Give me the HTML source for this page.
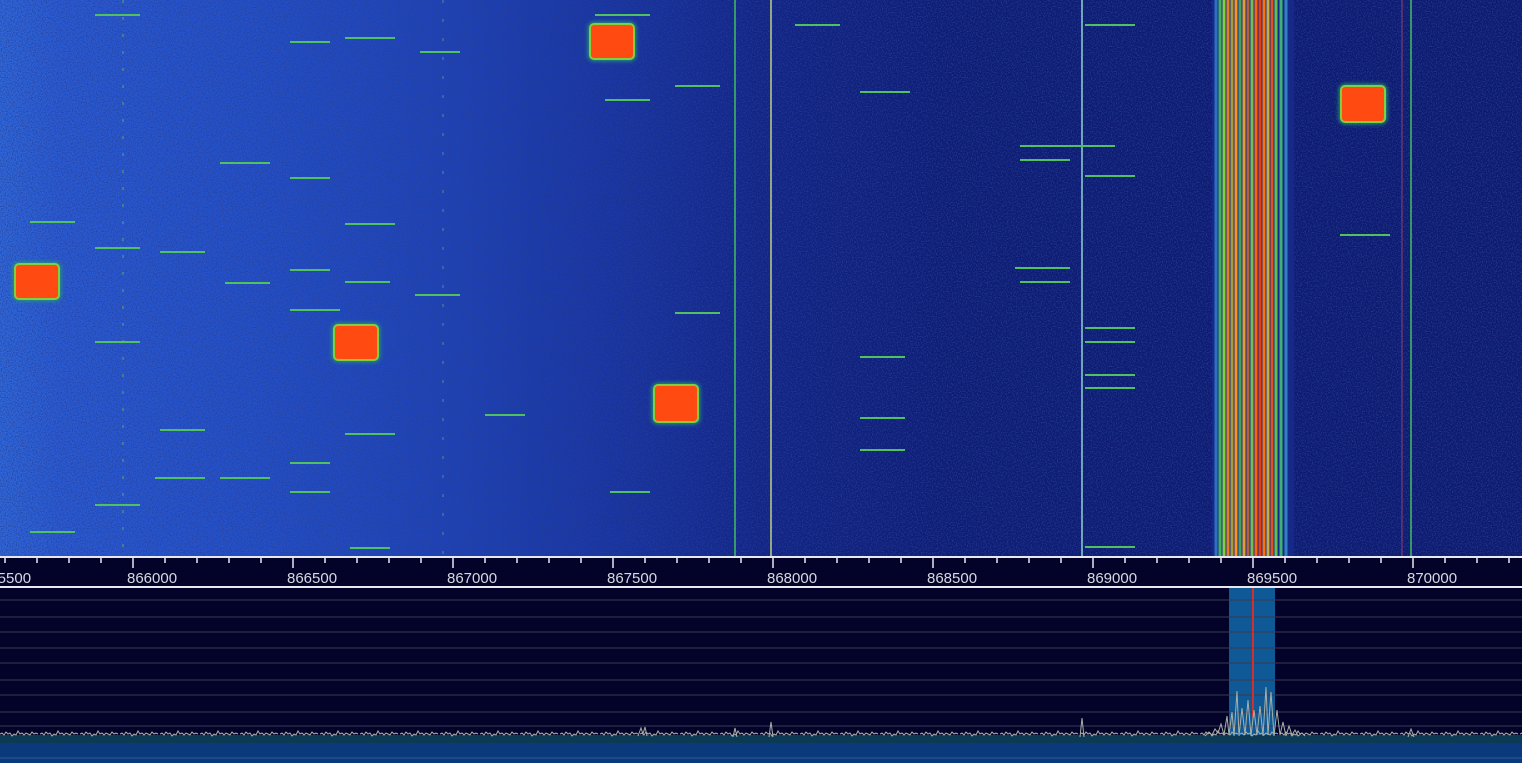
<!DOCTYPE html>
<html><head><meta charset="utf-8"><style>
html,body{margin:0;padding:0;background:#03032a;}
#root{position:relative;width:1522px;height:763px;overflow:hidden;font-family:"Liberation Sans",sans-serif;}
#wf{position:absolute;left:0;top:0;width:1522px;height:556px;
background:linear-gradient(90deg,#2f66d8 0px,#2a5ad2 60px,#2450c8 250px,#1e42b6 450px,#1833a0 620px,#122486 760px,#0e1c74 950px,#0d1a6e 1522px);}
.blk{position:absolute;width:42px;height:33px;background:#ff4a12;box-shadow:0 0 0 2px #7fd040,0 0 4px 3px #2a9a70;border-radius:3px;}
#axis{position:absolute;left:0;top:556px;width:1522px;height:32px;background:#03032a;border-top:2px solid #e8e8f0;border-bottom:2px solid #e8e8f0;box-sizing:border-box;}
.lbl{position:absolute;top:12px;color:#d8d8e0;font-size:15px;}
</style></head><body><div id="root">
<div id="wf"></div>
<svg style="position:absolute;left:0;top:0" width="1522" height="556">
<filter id="n"><feTurbulence type="fractalNoise" baseFrequency="0.8" numOctaves="1" seed="3"/><feColorMatrix values="0 0 0 0 0.02  0 0 0 0 0.05  0 0 0 0 0.3  0 0 0 4 -1.8"/></filter>
<rect width="1522" height="556" filter="url(#n)" opacity="0.7"/>
<g stroke-width="1.5">
<line x1="735" y1="0" x2="735" y2="556" stroke="#3fc060"/>
<line x1="771" y1="0" x2="771" y2="556" stroke="#c0d080"/>
<line x1="1082" y1="0" x2="1082" y2="556" stroke="#8fd0d0"/>
<line x1="1411" y1="0" x2="1411" y2="556" stroke="#40c060"/>
<line x1="1402" y1="0" x2="1402" y2="556" stroke="#a04070" opacity=".6"/>
<line x1="123" y1="0" x2="123" y2="556" stroke="#60a070" stroke-dasharray="3 14" opacity=".7"/>
<line x1="443" y1="0" x2="443" y2="556" stroke="#6090a0" stroke-dasharray="3 16" opacity=".6"/>
</g>
<rect x="1212" y="0" width="82" height="556" fill="#16288a"/>
<g stroke-width="3">
<line x1="1216" x2="1216" y1="0" y2="556" stroke="#3070c0"/>
<line x1="1220" x2="1220" y1="0" y2="556" stroke="#40b060"/>
<line x1="1224" x2="1224" y1="0" y2="556" stroke="#80d040"/>
<line x1="1228" x2="1228" y1="0" y2="556" stroke="#e08020"/>
<line x1="1232" x2="1232" y1="0" y2="556" stroke="#a0a040"/>
<line x1="1236" x2="1236" y1="0" y2="556" stroke="#ff9020"/>
<line x1="1240" x2="1240" y1="0" y2="556" stroke="#40a060"/>
<line x1="1244" x2="1244" y1="0" y2="556" stroke="#e0a030"/>
<line x1="1248" x2="1248" y1="0" y2="556" stroke="#b06040"/>
<line x1="1252" x2="1252" y1="0" y2="556" stroke="#70c050"/>
<line x1="1256" x2="1256" y1="0" y2="556" stroke="#ff6010"/>
<line x1="1260" x2="1260" y1="0" y2="556" stroke="#e04010"/>
<line x1="1264" x2="1264" y1="0" y2="556" stroke="#ff7010"/>
<line x1="1268" x2="1268" y1="0" y2="556" stroke="#c0b040"/>
<line x1="1272" x2="1272" y1="0" y2="556" stroke="#e05020"/>
<line x1="1276" x2="1276" y1="0" y2="556" stroke="#60c050"/>
<line x1="1281" x2="1281" y1="0" y2="556" stroke="#40b070"/>
<line x1="1286" x2="1286" y1="0" y2="556" stroke="#3080c0"/>
</g>
<g stroke="#50c060" stroke-width="2">
<line x1="95" x2="140" y1="15" y2="15"/><line x1="290" x2="330" y1="42" y2="42"/><line x1="345" x2="395" y1="38" y2="38"/>
<line x1="420" x2="460" y1="52" y2="52"/><line x1="595" x2="650" y1="15" y2="15"/><line x1="675" x2="720" y1="86" y2="86"/>
<line x1="795" x2="840" y1="25" y2="25"/><line x1="860" x2="910" y1="92" y2="92"/><line x1="1085" x2="1135" y1="25" y2="25"/>
<line x1="220" x2="270" y1="163" y2="163"/><line x1="290" x2="330" y1="178" y2="178"/><line x1="1020" x2="1115" y1="146" y2="146"/>
<line x1="1020" x2="1070" y1="160" y2="160"/><line x1="1085" x2="1135" y1="176" y2="176"/><line x1="1340" x2="1390" y1="235" y2="235"/>
<line x1="30" x2="75" y1="222" y2="222"/><line x1="95" x2="140" y1="248" y2="248"/><line x1="160" x2="205" y1="252" y2="252"/>
<line x1="345" x2="395" y1="224" y2="224"/><line x1="225" x2="270" y1="283" y2="283"/><line x1="290" x2="330" y1="270" y2="270"/>
<line x1="290" x2="340" y1="310" y2="310"/><line x1="345" x2="390" y1="282" y2="282"/><line x1="415" x2="460" y1="295" y2="295"/>
<line x1="1015" x2="1070" y1="268" y2="268"/><line x1="1020" x2="1070" y1="282" y2="282"/><line x1="1085" x2="1135" y1="328" y2="328"/>
<line x1="1085" x2="1135" y1="342" y2="342"/><line x1="1085" x2="1135" y1="375" y2="375"/><line x1="1085" x2="1135" y1="388" y2="388"/>
<line x1="95" x2="140" y1="342" y2="342"/><line x1="160" x2="205" y1="430" y2="430"/><line x1="345" x2="395" y1="434" y2="434"/>
<line x1="290" x2="330" y1="463" y2="463"/><line x1="155" x2="205" y1="478" y2="478"/><line x1="220" x2="270" y1="478" y2="478"/>
<line x1="290" x2="330" y1="492" y2="492"/><line x1="95" x2="140" y1="505" y2="505"/><line x1="30" x2="75" y1="532" y2="532"/>
<line x1="610" x2="650" y1="492" y2="492"/><line x1="485" x2="525" y1="415" y2="415"/><line x1="860" x2="905" y1="418" y2="418"/>
<line x1="860" x2="905" y1="450" y2="450"/><line x1="860" x2="905" y1="357" y2="357"/><line x1="1085" x2="1135" y1="547" y2="547"/>
<line x1="350" x2="390" y1="548" y2="548"/><line x1="675" x2="720" y1="313" y2="313"/><line x1="605" x2="650" y1="100" y2="100"/>
</g>
</svg>
<div class="blk" style="left:16px;top:265px"></div>
<div class="blk" style="left:335px;top:326px"></div>
<div class="blk" style="left:591px;top:25px"></div>
<div class="blk" style="left:655px;top:386px;height:35px"></div>
<div class="blk" style="left:1342px;top:87px;height:34px"></div>
<div id="axis">
<svg style="position:absolute;left:0;top:0" width="1522" height="12" stroke="#e8e8f0" stroke-width="1.5">
<path d="M5 0v5M37 0v5M69 0v5M101 0v5M165 0v5M197 0v5M229 0v5M261 0v5M325 0v5M357 0v5M389 0v5M421 0v5M485 0v5M517 0v5M549 0v5M581 0v5M645 0v5M677 0v5M709 0v5M741 0v5M805 0v5M837 0v5M869 0v5M901 0v5M965 0v5M997 0v5M1029 0v5M1061 0v5M1125 0v5M1157 0v5M1189 0v5M1221 0v5M1285 0v5M1317 0v5M1349 0v5M1381 0v5M1445 0v5M1477 0v5M1509 0v5"/>
<path d="M133 0v10M293 0v10M453 0v10M613 0v10M773 0v10M933 0v10M1093 0v10M1253 0v10M1413 0v10"/>
</svg>
<div class="lbl" style="left:-19px">865500</div>
<div class="lbl" style="left:127px">866000</div>
<div class="lbl" style="left:287px">866500</div>
<div class="lbl" style="left:447px">867000</div>
<div class="lbl" style="left:607px">867500</div>
<div class="lbl" style="left:767px">868000</div>
<div class="lbl" style="left:927px">868500</div>
<div class="lbl" style="left:1087px">869000</div>
<div class="lbl" style="left:1247px">869500</div>
<div class="lbl" style="left:1407px">870000</div>
</div>
<svg style="position:absolute;left:0;top:588px" width="1522" height="175">
<defs><pattern id="nz" width="40" height="12" patternUnits="userSpaceOnUse" y="140">
<path d="M0 6l2-1 2 2 2-3 2 2 2-1 2 3 2-2 2 1 2-4 2 3 2-1 2 2 2-2 2 1 2 1 2-3 2 2 2-1 2 1" fill="none" stroke="#a8b0a8" stroke-width="1"/></pattern></defs>
<rect x="1229" y="0" width="46" height="152" fill="#0f5a96"/>
<g stroke="#3a3a52" stroke-width="1">
<line x1="0" x2="1522" y1="12" y2="12"/><line x1="0" x2="1522" y1="29" y2="29"/><line x1="0" x2="1522" y1="44" y2="44"/>
<line x1="0" x2="1522" y1="60" y2="60"/><line x1="0" x2="1522" y1="75" y2="75"/><line x1="0" x2="1522" y1="92" y2="92"/>
<line x1="0" x2="1522" y1="107" y2="107"/><line x1="0" x2="1522" y1="124" y2="124"/><line x1="0" x2="1522" y1="138" y2="138"/>
</g>
<line x1="1253" x2="1253" y1="0" y2="130" stroke="#d03030" stroke-width="2"/>
<rect x="0" y="147" width="1522" height="8" fill="#0c3a55"/>
<rect x="0" y="155" width="1522" height="20" fill="#0b3a7c"/>
<line x1="0" x2="1522" y1="170" y2="170" stroke="#2a5a9a"/>
<rect x="0" y="140" width="1522" height="12" fill="url(#nz)"/>
<g fill="none" stroke="#a8b0a8" stroke-width="1">
<path d="M638 148l3-8 2 6 2-7 2 9"/><path d="M733 149l2-9 2 9"/><path d="M769 149l2-15 2 15"/><path d="M1080 149l2-19 2 19"/>
<path d="M1408 149l3-8 3 8"/>
<path d="M1205 148L1209 144L1212 147L1215 141L1218 145L1221 136L1224 147L1227 128L1229 147L1232 124L1234 148L1237 103L1239 148L1242 120L1245 147L1248 112L1251 148L1254 122L1257 147L1260 118L1263 148L1266 99L1268 147L1271 104L1274 148L1277 122L1280 147L1283 134L1286 148L1289 138L1292 147L1295 142L1298 148L1302 145L1305 148"/>
</g>
</svg>
</div></body></html>
